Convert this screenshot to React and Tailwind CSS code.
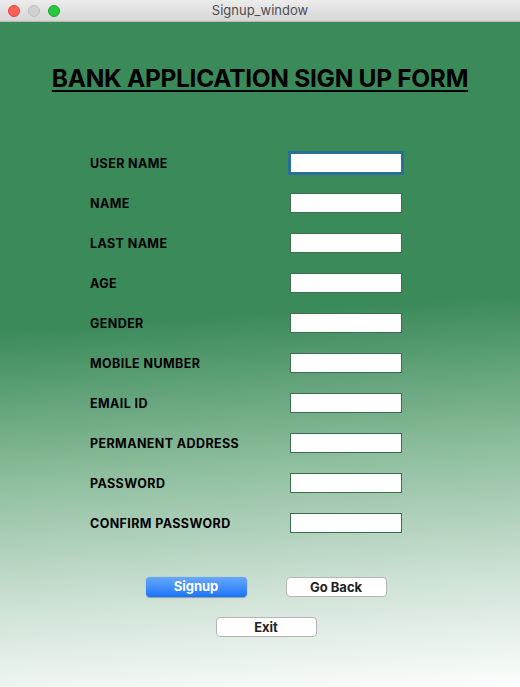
import React from "react";

const fields = [
  "USER NAME",
  "NAME",
  "LAST NAME",
  "AGE",
  "GENDER",
  "MOBILE NUMBER",
  "EMAIL ID",
  "PERMANENT ADDRESS",
  "PASSWORD",
  "CONFIRM PASSWORD",
];

const App = () => {
  return (
    <div className="w-[520px] h-[687px] flex flex-col overflow-hidden font-['Liberation_Sans',Arial,sans-serif]">
      {/* Title bar */}
      <div className="h-[22px] shrink-0 relative flex items-center justify-center bg-gradient-to-b from-[#ececec] to-[#d6d6d6] border-b border-[#b9b9b9]">
        <div className="absolute left-[8px] top-[5px] flex gap-[8px]">
          <span className="w-[12px] h-[12px] rounded-full bg-[#fd5f57] border border-[#e0443e]" />
          <span className="w-[12px] h-[12px] rounded-full bg-[#d0d0d0] border border-[#bdbdbd]" />
          <span className="w-[12px] h-[12px] rounded-full bg-[#28c840] border border-[#1aab29]" />
        </div>
        <span className="text-[13px] text-[#4d4d4d] font-['Inter',sans-serif]">Signup_window</span>
      </div>

      {/* Body */}
      <div className="flex-1 flex flex-col bg-[linear-gradient(176deg,#3b8a5a_0%,#3b8a5a_44%,#8fbf9f_66%,#cfe2d6_84%,#fdfefd_100%)]">
        <h1 className="mt-[38px] text-center text-[24.5px] font-bold text-black underline underline-offset-[3px] decoration-[2px] font-['Inter',sans-serif] tracking-[-0.3px]">
          BANK APPLICATION SIGN UP FORM
        </h1>

        <div className="mt-[56px] pl-[90px] flex flex-col gap-[20px]">
          {fields.map((label, i) => (
            <div key={label} className="flex items-center h-[20px]">
              <span className="w-[200px] pt-[3px] text-[12.5px] font-bold text-black font-['Inter',sans-serif] tracking-[0.4px]">
                {label}
              </span>
              <div
                className={
                  i === 0
                    ? "w-[112px] h-[20px] bg-white border border-[#5a7a8a] outline outline-[3px] outline-[#2a6f95] -outline-offset-[1px]"
                    : "w-[112px] h-[20px] bg-white border border-[#3a6e4c]"
                }
              />
            </div>
          ))}
        </div>

        <div className="mt-[44px] flex justify-center gap-[39px] pl-[12px]">
          <button className="w-[101px] h-[20px] rounded-[4px] bg-gradient-to-b from-[#69a8fb] to-[#1673fb] text-white text-[13px] font-bold font-['Inter',sans-serif] shadow-[0_0.5px_1px_rgba(0,0,0,0.3)]">
            Signup
          </button>
          <button className="w-[101px] h-[20px] rounded-[4px] bg-white border border-[#b5b5b5] text-[#222] text-[13px] font-bold font-['Inter',sans-serif]">
            Go Back
          </button>
        </div>
        <div className="mt-[20px] flex justify-center pl-[12px]">
          <button className="w-[101px] h-[20px] rounded-[4px] bg-white border border-[#b5b5b5] text-[#222] text-[13px] font-bold font-['Inter',sans-serif]">
            Exit
          </button>
        </div>
      </div>
    </div>
  );
};

export default App;
